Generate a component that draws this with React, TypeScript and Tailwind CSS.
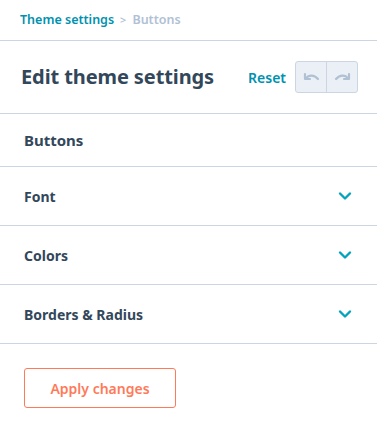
import React from 'react';

const ChevronDown: React.FC = () => (
  <svg width="14" height="10" viewBox="0 0 14 10" fill="none">
    <path d="M2 2.5L7 7.5L12 2.5" stroke="#00a4bd" strokeWidth="2.4" strokeLinecap="round" strokeLinejoin="round" />
  </svg>
);

const UndoIcon: React.FC<{ flip?: boolean }> = ({ flip }) => (
  <svg width="17" height="12" viewBox="0 0 17 12" fill="none" style={flip ? { transform: 'scaleX(-1)' } : undefined}>
    <path d="M2 3v5h5" stroke="#b0c1d4" strokeWidth="2.2" strokeLinecap="round" strokeLinejoin="round" />
    <path d="M3 7.5C5.5 3.8 11 3.2 15 8" stroke="#b0c1d4" strokeWidth="2.2" strokeLinecap="round" />
  </svg>
);

const sections = ['Font', 'Colors', 'Borders & Radius'];

const App: React.FC = () => {
  return (
    <div className="w-[377px] h-[430px] bg-white text-[#33475b]" style={{ fontFamily: '"Noto Sans", Lato, sans-serif' }}>
      <div className="h-[41px] flex items-center px-5 text-[12.5px] font-semibold border-b border-[#cbd6e2]">
        <span className="text-[#0091ae]">Theme settings</span>
        <span className="mx-[6px] text-[#b0c1d4] text-[11px]">&gt;</span>
        <span className="text-[#b0c1d4]">Buttons</span>
      </div>

      <div className="h-[73px] flex items-center justify-between pl-[21px] pr-[19px] border-b border-[#cbd6e2]">
        <h1 className="text-[20px] font-bold tracking-[-0.1px]">Edit theme settings</h1>
        <div className="flex items-center gap-[9px]">
          <span className="text-[#0091ae] text-[14px] font-semibold">Reset</span>
          <div className="flex h-[32px] rounded-[3px] border border-[#cbd6e2] bg-[#eaf0f6]">
            <div className="w-[31px] flex items-center justify-center border-r border-[#cbd6e2]">
              <UndoIcon />
            </div>
            <div className="w-[30px] flex items-center justify-center">
              <UndoIcon flip />
            </div>
          </div>
        </div>
      </div>

      <div className="h-[53px] flex items-center px-6 border-b border-[#cbd6e2]">
        <span className="text-[15px] font-bold">Buttons</span>
      </div>

      {sections.map((s) => (
        <div key={s} className="h-[59px] flex items-center justify-between pl-6 pr-[25px] border-b border-[#cbd6e2]">
          <span className="text-[14px] font-bold">{s}</span>
          <ChevronDown />
        </div>
      ))}

      <div className="px-6 pt-6">
        <button className="w-[152px] h-[40px] rounded-[3px] border border-[#ff7a59] text-[#ff7a59] text-[14px] font-semibold">
          Apply changes
        </button>
      </div>
    </div>
  );
};

export default App;
